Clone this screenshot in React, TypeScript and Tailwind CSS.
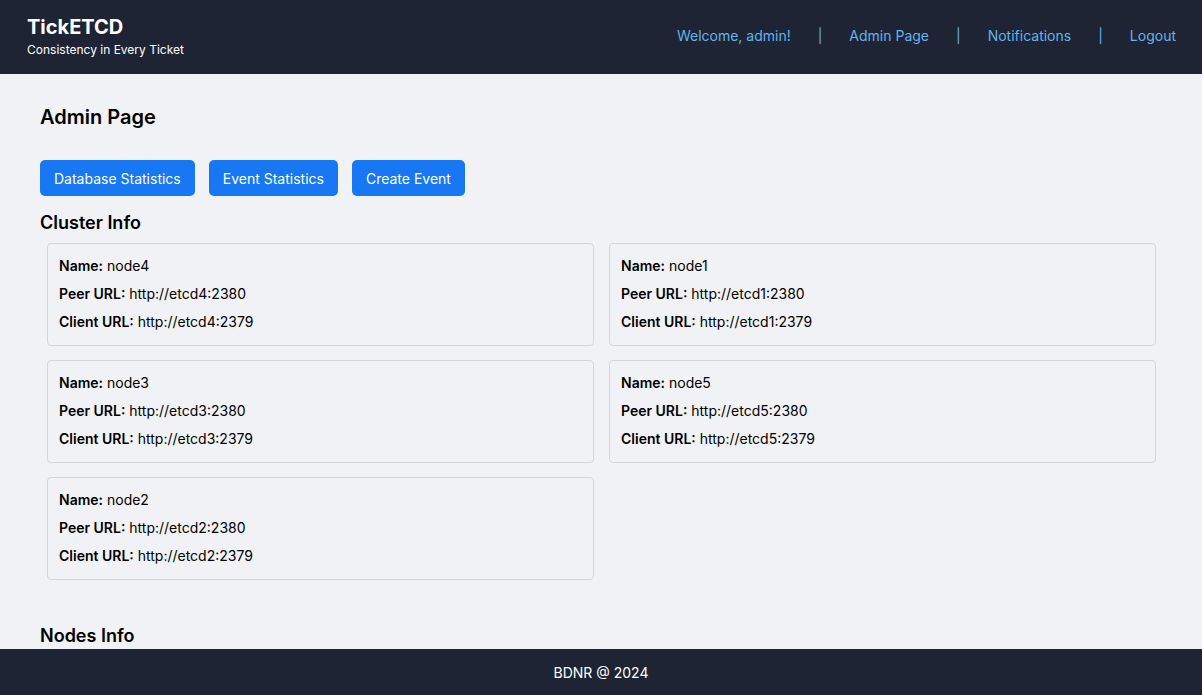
type ClusterNode = { name: string; peer: string; client: string };

const nodes: ClusterNode[] = [
  { name: "node4", peer: "http://etcd4:2380", client: "http://etcd4:2379" },
  { name: "node1", peer: "http://etcd1:2380", client: "http://etcd1:2379" },
  { name: "node3", peer: "http://etcd3:2380", client: "http://etcd3:2379" },
  { name: "node5", peer: "http://etcd5:2380", client: "http://etcd5:2379" },
  { name: "node2", peer: "http://etcd2:2380", client: "http://etcd2:2379" },
];

const links = ["Welcome, admin!", "Admin Page", "Notifications", "Logout"];

function Header() {
  return (
    <header className="flex h-[74px] shrink-0 items-center justify-between bg-[#1e2433] pl-[27px] pr-[26px] pb-[3px] text-white">
      <div className="flex flex-col">
        <span className="text-[20px] font-bold leading-[28px]">TickETCD</span>
        <span className="mt-px text-[12px] leading-[16px]">Consistency in Every Ticket</span>
      </div>
      <nav className="flex items-center gap-[27px] text-[14px] text-[#63b3ed]">
        {links.map((l, i) => (
          <div key={l} className="flex items-center gap-[27px]">
            {i > 0 && <span>|</span>}
            <a href="#">{l}</a>
          </div>
        ))}
      </nav>
    </header>
  );
}

function NodeCard({ node }: { node: ClusterNode }) {
  return (
    <div className="m-[7px] flex flex-col gap-2 rounded border border-[#d4d6da] px-[11px] pt-3 pb-[13px] text-[14px] leading-5 text-black">
      <p>
        <b className="font-semibold">Name:</b> {node.name}
      </p>
      <p>
        <b className="font-semibold">Peer URL:</b> {node.peer}
      </p>
      <p>
        <b className="font-semibold">Client URL:</b> {node.client}
      </p>
    </div>
  );
}

export default function App() {
  return (
    <div
      className="flex h-screen flex-col overflow-hidden bg-[#f0f2f5]"
      style={{ fontFamily: "Inter, 'Noto Sans', sans-serif" }}
    >
      <Header />
      <main className="flex-1 overflow-hidden px-10 pt-[29px] text-black">
        <h1 className="text-[20px] font-semibold leading-[28px]">Admin Page</h1>
        <div className="mt-[29px] flex gap-[14px]">
          {["Database Statistics", "Event Statistics", "Create Event"].map((b) => (
            <button
              key={b}
              className="h-9 rounded-[5px] bg-[#1877f2] px-[14px] text-[14px] text-white"
            >
              {b}
            </button>
          ))}
        </div>
        <h2 className="mt-[13px] text-[18px] font-semibold leading-[27px]">Cluster Info</h2>
        <div className="grid grid-cols-[561px_561px] gap-x-px">
          {nodes.map((n) => (
            <NodeCard key={n.name} node={n} />
          ))}
        </div>
        <h2 className="mt-[35px] text-[18px] font-semibold leading-[28px]">Nodes Info</h2>
      </main>
      <footer className="flex h-[46px] shrink-0 items-center justify-center bg-[#1e2433] pt-px text-[14px] text-white">
        BDNR @ 2024
      </footer>
    </div>
  );
}
